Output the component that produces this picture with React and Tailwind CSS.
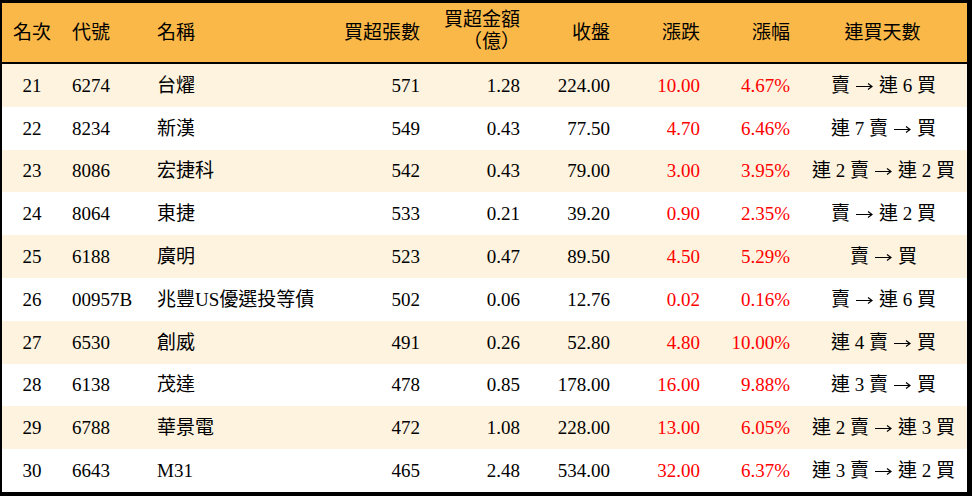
import React from 'react';

const rows = [
  ['21', '6274', '台燿', '571', '1.28', '224.00', '10.00', '4.67%', '賣 → 連 6 買'],
  ['22', '8234', '新漢', '549', '0.43', '77.50', '4.70', '6.46%', '連 7 賣 → 買'],
  ['23', '8086', '宏捷科', '542', '0.43', '79.00', '3.00', '3.95%', '連 2 賣 → 連 2 買'],
  ['24', '8064', '東捷', '533', '0.21', '39.20', '0.90', '2.35%', '賣 → 連 2 買'],
  ['25', '6188', '廣明', '523', '0.47', '89.50', '4.50', '5.29%', '賣 → 買'],
  ['26', '00957B', '兆豐US優選投等債', '502', '0.06', '12.76', '0.02', '0.16%', '賣 → 連 6 買'],
  ['27', '6530', '創威', '491', '0.26', '52.80', '4.80', '10.00%', '連 4 賣 → 買'],
  ['28', '6138', '茂達', '478', '0.85', '178.00', '16.00', '9.88%', '連 3 賣 → 買'],
  ['29', '6788', '華景電', '472', '1.08', '228.00', '13.00', '6.05%', '連 2 賣 → 連 3 買'],
  ['30', '6643', 'M31', '465', '2.48', '534.00', '32.00', '6.37%', '連 3 賣 → 連 2 買'],
];

const cols = 'grid grid-cols-[60px_85px_183px_100px_100px_90px_90px_90px_1fr]';

// 連買天數: thin long arrow between the two streaks
const Streak = ({ text }) => {
  const [a, b] = text.split('→');
  return (
    <div className="flex justify-center items-center whitespace-pre">
      <span>{a.trim()}</span>
      <svg width="17" height="9" viewBox="0 0 17 9" className="mx-[6px] mt-[2px]" aria-label="→">
        <path d="M0 4.5H16M12 1.5L16 4.5L12 7.5" fill="none" stroke="#000" strokeWidth="1.2" />
      </svg>
      <span>{b.trim()}</span>
    </div>
  );
};

export default function App() {
  return (
    <div
      className="w-[972px] h-[496px] bg-white border-black border-t-[3px] border-l-[2px] border-r-[5px] border-b-[4px] text-[19px] text-black leading-none"
      style={{ fontFamily: '"Liberation Serif", "Noto Sans CJK TC", serif' }}
    >
      <div className={`${cols} h-[61px] bg-[#f9b848] border-b-2 border-black items-center`}>
        <div className="text-center">名次</div>
        <div className="pl-[10px]">代號</div>
        <div className="pl-[10px]">名稱</div>
        <div className="text-right pr-[10px]">買超張數</div>
        <div className="text-right pr-[10px] leading-[22px] pb-[4px]">
          <div>買超金額</div>
          <div>（億）</div>
        </div>
        <div className="text-right pr-[10px]">收盤</div>
        <div className="text-right pr-[10px]">漲跌</div>
        <div className="text-right pr-[10px]">漲幅</div>
        <div className="text-center pr-[2px]">連買天數</div>
      </div>
      {rows.map((r, i) => (
        <div
          key={r[0]}
          className={`${cols} h-[42.8px] items-center ${i % 2 === 0 ? 'bg-[#fdf3df]' : 'bg-white'}`}
        >
          <div className="text-center">{r[0]}</div>
          <div className="pl-[10px]">{r[1]}</div>
          <div className="pl-[10px] whitespace-nowrap">{r[2]}</div>
          <div className="text-right pr-[10px]">{r[3]}</div>
          <div className="text-right pr-[10px]">{r[4]}</div>
          <div className="text-right pr-[10px]">{r[5]}</div>
          <div className="text-right pr-[10px] text-[#ff0000]">{r[6]}</div>
          <div className="text-right pr-[10px] text-[#ff0000]">{r[7]}</div>
          <Streak text={r[8]} />
        </div>
      ))}
    </div>
  );
}
